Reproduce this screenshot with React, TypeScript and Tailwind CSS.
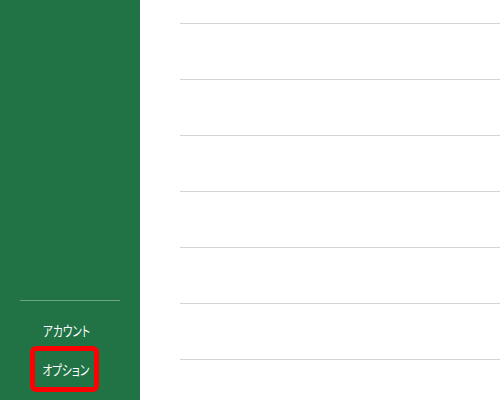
const ROWS = [0, 1, 2, 3, 4, 5];

export default function App() {
  return (
    <div className="flex h-[400px] w-[500px] overflow-hidden bg-white">
      {/* 左メニュー */}
      <aside className="flex h-full w-[140px] flex-shrink-0 flex-col justify-end bg-[#217346] font-['Noto_Sans_CJK_JP',sans-serif] text-[14px] text-white [font-feature-settings:'palt']">
        <div className="mx-5 h-px bg-[#6da584]" />
        <div className="pl-[43px] pt-[21px] leading-[16px]">
          <span className="inline-block origin-left scale-x-[0.76] whitespace-nowrap">アカウント</span>
        </div>
        <div className="mb-2 ml-[30px] mt-2 flex h-[46px] w-[69px] items-center justify-center rounded-[6px] border-[5px] border-[#ff0000] leading-[16px]">
          <span className="ml-0.5 inline-block scale-x-[0.76] whitespace-nowrap">オプション</span>
        </div>
      </aside>

      {/* 右側リスト */}
      <main className="flex-1 pl-10">
        <div className="h-6 border-b border-[#d5d5d5]" />
        {ROWS.map((i) => (
          <div key={i} className="h-14 border-b border-[#d5d5d5]" />
        ))}
      </main>
    </div>
  );
}
